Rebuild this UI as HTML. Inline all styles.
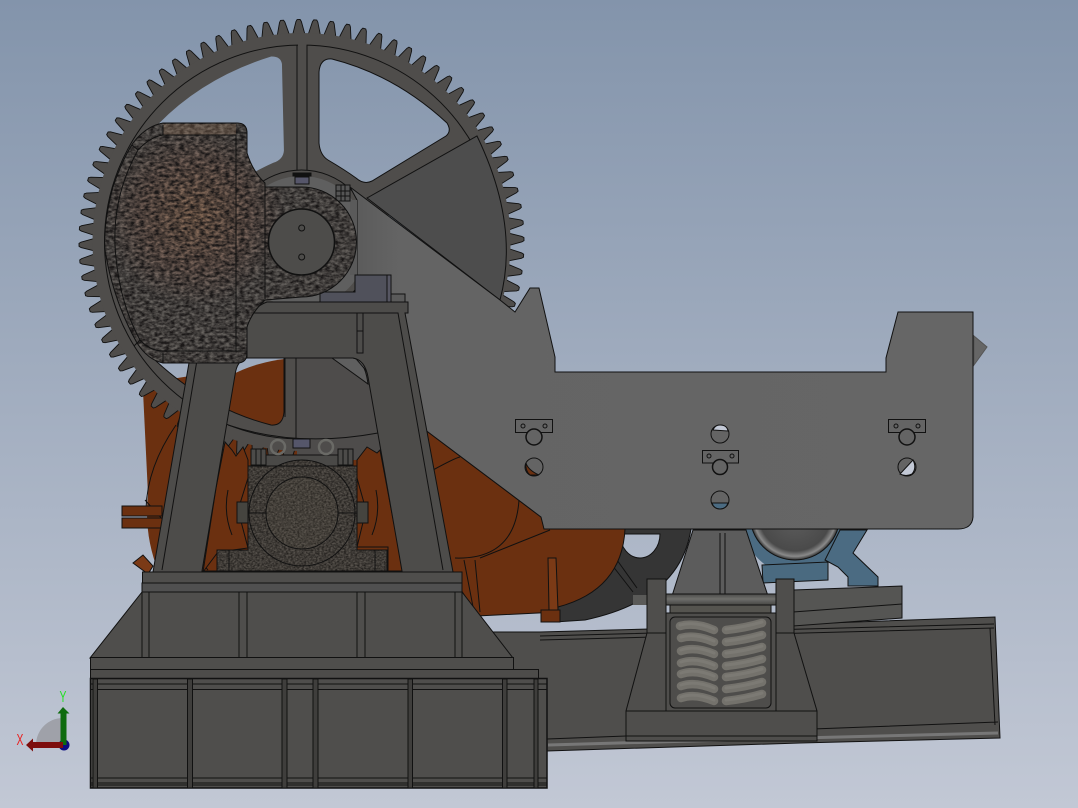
<!DOCTYPE html>
<html><head><meta charset="utf-8"><style>
html,body{margin:0;padding:0;width:1078px;height:808px;overflow:hidden;background:#a0abbd}
svg{display:block}
text{font-family:"Liberation Sans",sans-serif}
</style></head><body>
<svg width="1078" height="808" viewBox="0 0 1078 808" xmlns="http://www.w3.org/2000/svg">
<defs>
<linearGradient id="bg" x1="0" y1="0" x2="0" y2="1"><stop offset="0" stop-color="#8394ab"/><stop offset="1" stop-color="#c2c8d5"/></linearGradient>
<linearGradient id="plate" x1="0" y1="0" x2="1" y2="0"><stop offset="0" stop-color="#5a5a5a"/><stop offset=".08" stop-color="#646464"/><stop offset="1" stop-color="#666"/></linearGradient>
<linearGradient id="rod" x1="0" y1="0" x2="0" y2="1"><stop offset="0" stop-color="#4a4a48"/><stop offset=".45" stop-color="#6f6f6c"/><stop offset="1" stop-color="#454543"/></linearGradient>
<radialGradient id="hubg" gradientUnits="userSpaceOnUse" cx="795" cy="515" r="45"><stop offset="0" stop-color="#5f5f5f"/><stop offset=".8" stop-color="#4a4a4a"/><stop offset=".92" stop-color="#8a8a8a"/><stop offset="1" stop-color="#303030"/></radialGradient>
<radialGradient id="stoneb" gradientUnits="userSpaceOnUse" cx="195" cy="215" r="90"><stop offset="0" stop-color="#8f705a"/><stop offset=".6" stop-color="#78645a"/><stop offset="1" stop-color="#686460"/></radialGradient>
<filter id="stone" x="0" y="0" width="1" height="1" color-interpolation-filters="sRGB">
<feTurbulence type="fractalNoise" baseFrequency=".2 .36" numOctaves="3" seed="4" result="n"/>
<feColorMatrix in="n" values="0 0 0 0 .1 0 0 0 0 .09 0 0 0 0 .09 1.8 0 0 0 -.38" result="d"/>
<feComposite in="d" in2="SourceGraphic" operator="atop"/>
</filter>
<filter id="stone2" x="0" y="0" width="1" height="1" color-interpolation-filters="sRGB">
<feTurbulence type="fractalNoise" baseFrequency=".45 .6" numOctaves="2" seed="9" result="n"/>
<feColorMatrix in="n" values="0 0 0 0 .12 0 0 0 0 .11 0 0 0 0 .1 1.6 0 0 0 -.35" result="d"/>
<feComposite in="d" in2="SourceGraphic" operator="atop"/>
</filter>
<path id="win" d="M319,72 Q320,58 332,59 Q395,75 447,123 Q452,131 446,136 L372,181 Q364,185 356,178 Q345,170 328,160 Q320,155 319,143 Z"/>
<mask id="gm" maskUnits="userSpaceOnUse" x="0" y="0" width="1078" height="808">
<rect width="1078" height="808" fill="#fff"/>
<g fill="#000">
<use href="#win"/>
<use href="#win" transform="rotate(60 301.5 242)"/>
<use href="#win" transform="rotate(120 301.5 242)"/>
<use href="#win" transform="rotate(180 301.5 242)"/>
<use href="#win" transform="rotate(240 301.5 242)"/>
<use href="#win" transform="rotate(300 301.5 242)"/>
</g></mask>
<path id="t" d="M295.500,34 L298.800,21.500 L300,19.500 L303,19.500 L304.200,21.500 L307.500,34 Z"/>
<g id="t7">
<use href="#t"/>
<use href="#t" transform="rotate(4.2857 301.5 242)"/>
<use href="#t" transform="rotate(8.5714 301.5 242)"/>
<use href="#t" transform="rotate(12.8571 301.5 242)"/>
<use href="#t" transform="rotate(17.1429 301.5 242)"/>
<use href="#t" transform="rotate(21.4286 301.5 242)"/>
<use href="#t" transform="rotate(25.7143 301.5 242)"/>
</g>
<g id="t28">
<use href="#t7"/>
<use href="#t7" transform="rotate(30 301.5 242)"/>
<use href="#t7" transform="rotate(60 301.5 242)"/>
<use href="#t7" transform="rotate(90 301.5 242)"/>
</g>
</defs>
<rect width="1078" height="808" fill="url(#bg)"/>

<!-- beam and motor base -->
<g stroke="#111" stroke-width="1">
<path d="M490,632 L540,632 L650,629 L800,624 L995,617 L1000,738 L800,743 L547,751 L490,700 Z" fill="#4f4e4c"/>
<path d="M547,739 L998,722 M540,636 L994,624 M540,640 L994,628 M990,628 L995,725" fill="none"/>
<path d="M548,745 L800,738 L998,733" fill="none" stroke="#777" stroke-width="3"/>
<path d="M793,590 L902,586 V618 L793,626 Z" fill="#555553"/>
<path d="M793,612 L902,604" fill="none"/>

<!-- motor -->
<circle cx="795" cy="522" r="52" fill="#4b6b82" stroke="none"/>
<path d="M840,530 H867 L853,553 L878,577 V586 H848 V577 L838,567 L825,560 Z" fill="#4b6b82"/>
<circle cx="795" cy="515" r="45" fill="url(#hubg)"/>
<path d="M762,565 L828,562 V580 L763,583 Z" fill="#4a6a80"/>

<!-- stand -->
<path d="M693,530 H746 L768,596 H672 Z" fill="#5c5c5c"/>
<path d="M720,533 V596 M725,533 V596" fill="none"/>

<!-- dark disc -->
<path fill-rule="evenodd" d="M600,529 H691 Q680,600 585,620 L555,622 V600 Z M620,534 A20,24 0 0 0 660,534 Z" fill="#353535"/>
<path d="M612,565 L633,592 M617,560 L637,588" fill="none"/>
</g>

<!-- orange -->
<g fill="#6b3010" stroke="#111" stroke-width="1">
<circle cx="302" cy="513" r="155" stroke="none"/>
<path d="M143,391 L165,380 L190,376 L200,500 L158,570 L149,515 Z" stroke="none"/>
<path d="M400,410 L428,432 L541,517 L545,529 H625 Q622,590 558,607 L558,612 L477,616 L452,575 Z"/>
<path d="M548,558 H556 L558,610 H549 Z" fill="#7b3a16"/>
<path d="M541,610 H560 V622 H541 Z"/>
<path d="M208,570 L145,500 M433,470 Q455,458 460,457 M519,500 Q515,560 455,558 M464,560 L474,612 M475,560 L480,612 M480,558 L550,530" fill="none"/>
<path d="M176,425 Q145,470 146,515" fill="none"/>
<path d="M122,506 H162 V516 H122 Z M122,518 H162 V528 H122 Z"/>
<path d="M133,563 L143,555 L153,566 L148,574 Z" fill="#7b3a16"/>
</g>

<!-- gear -->
<g transform="rotate(-0.74 301.5 242)" fill="#4f4d4b" stroke="#111" stroke-width=".9">
<use href="#t28"/>
<use href="#t28" transform="rotate(120 301.5 242)"/>
<use href="#t28" transform="rotate(240 301.5 242)"/>
</g>
<circle cx="301.5" cy="242" r="209" fill="#4f4d4b" mask="url(#gm)"/>
<g fill="none" stroke="#111" stroke-width="1">
<use href="#win"/>
<use href="#win" transform="rotate(120 301.5 242)"/>
<use href="#win" transform="rotate(180 301.5 242)"/>
<circle cx="301.5" cy="242" r="197"/>
<path d="M297,45 V170 M307,45 V170"/>
<path d="M285,358 V417 M296,358 V440"/>
</g>
<rect x="298" y="44" width="8.5" height="3" fill="#4f4d4b"/>

<!-- hub light area -->
<circle cx="301.5" cy="242" r="72" fill="#4f4d4b" stroke="#111"/>
<circle cx="301.5" cy="242" r="66" fill="#5f5f5f"/>

<!-- dark sector -->
<path d="M367,198 L477,136 Q520,225 500,300 Z" fill="#4d4d4d" stroke="#111"/>

<!-- lower right inside opening -->
<path d="M297,358 H372 L404,460 L297,460 Z" fill="#4e4c4b"/>
<path d="M332,358 H353 Q365,360 368,384 Z" fill="#5f5f5f" stroke="#111"/>
<path d="M228,425 Q297,448 378,433" fill="none" stroke="#111"/>
<path d="M225,442 L232,450 L236,456 L243,447 L248,460 L248,478 L238,510 L248,548 L218,552 L203,572 L216,488 Z" fill="#6b3010" stroke="#111"/>
<path d="M367,447 L377,453 L380,450 L403,572 H388 L388,547 H357 L366,510 L357,478 L357,460 Z" fill="#6b3010" stroke="#111"/>
<path d="M228,490 A78,78 0 0 0 232,535 M376,490 A78,78 0 0 1 372,535" fill="none" stroke="#111"/>

<!-- plate -->
<path d="M350,187 L500,300 L515,312 L530,288 L539,288 L555,357 V372 H886 V358 L898,312 H973 V517 Q972,529 958,529 H544 L541,517 L428,432 L400,410 L357,360 V200 Z" fill="url(#plate)" stroke="#111" stroke-width="1"/>
<path d="M974,336 L987,347 L974,365 Z" fill="#666" stroke="#555"/>

<!-- plate holes -->
<g stroke="#111" stroke-width="1" fill="#646464">
<circle cx="534" cy="467" r="9"/><path d="M526,463 Q528,470 539,475 L530,475 Q525,471 526,463 Z" fill="#6b3010"/>
<circle cx="720" cy="434" r="9"/><path d="M713,430 L728,431 Q727,425 720,425 Q715,425 713,430 Z" fill="#c3c9d6"/>
<circle cx="907" cy="467" r="9"/><path d="M900,474 L913,460 Q917,468 912,474 Q906,477 900,474 Z" fill="#c3c9d6"/>
<circle cx="720" cy="500" r="9"/><path d="M712,503 H728 Q726,509 720,509 Q714,509 712,503 Z" fill="#4b6b82"/>
<rect x="515.500" y="419.500" width="37" height="13"/>
<rect x="888.500" y="419.500" width="37" height="13"/>
<rect x="702.500" y="450.500" width="36" height="12.500"/>
<circle cx="534" cy="437" r="8" stroke-width="1.500"/>
<circle cx="907" cy="437" r="8" stroke-width="1.500"/>
<circle cx="720" cy="467" r="7.500" stroke-width="1.500"/>
<circle cx="523" cy="426" r="2"/><circle cx="545" cy="426" r="2"/>
<circle cx="896" cy="426" r="2"/><circle cx="918" cy="426" r="2"/>
<circle cx="709" cy="456" r="2"/><circle cx="732" cy="456" r="2"/>
</g>

<!-- upper machinery near hub -->
<g stroke="#111" stroke-width="1">
<path d="M350,200 H357 V275 H350 Z" fill="#5a5a5a" stroke="none"/>
<path d="M355,275 H387 V302 H320 V292 H355 Z" fill="#50515b"/>
<path d="M387,275 H391 V302 H387 Z" fill="#565662"/>
<path d="M391,294 H405 V302 H391 Z" fill="#5a5a5a"/>
<rect x="336" y="185" width="14" height="16" fill="#555"/>
<path d="M341,185 V201 M345,185 V201 M336,191 H350 M336,196 H350" fill="none"/>
<rect x="293" y="173" width="18" height="3" fill="#111"/>
<rect x="295" y="177" width="14" height="7" fill="#56566a"/>
</g>

<!-- frame -->
<g stroke="#111" stroke-width="1" fill="#4d4c4a">
<path fill-rule="evenodd" d="M267,302 H408 V313 H405 L453,572 H153 L190,357 H247 V327 Q250,308 267,302 Z M247,358 H353 Q365,360 368,377 L402,571 H202 L235,375 Q237,360 247,358 Z"/>
<path d="M253,313 H398 L443,570 M197,360 L162,570" fill="none"/>
<rect x="357" y="313" width="6" height="40" fill="#4d4c4a"/>
<path d="M357,331 H363" fill="none"/>
</g>

<!-- stone block and hub -->
<g filter="url(#stone)">
<path d="M163,123 H237 Q247,123 247,133 V153 Q253,172 265,183 V187 H301.500 A55,55 0 0 1 301.500,297 L265,300 Q252,312 247,327 V353 Q247,363 237,363 H163 Q148,360 137,343 Q113,300 105,250 Q103,225 113,187 Q122,160 133,143 Q146,126 163,123 Z" fill="url(#stoneb)"/>
</g>
<rect x="163" y="124" width="73" height="11" fill="#9a7a60" fill-opacity=".3"/>
<path d="M163,123 H237 Q247,123 247,133 V153 Q253,172 265,183 V187 H301.500 A55,55 0 0 1 301.500,297 L265,300 Q252,312 247,327 V353 Q247,363 237,363 H163 Q148,360 137,343 Q113,300 105,250 Q103,225 113,187 Q122,160 133,143 Q146,126 163,123 Z" fill="none" stroke="#111"/>
<g fill="none" stroke="#111" stroke-width="1">
<path d="M163,125 V135 M163,353 V363 M163,135 H236 V351 H163 M247,133 H236 M247,351 H236"/>
<path d="M163,135 Q150,137 138,150 Q113,195 115,245 Q118,300 140,340 Q150,351 163,351"/>
<path d="M265,183 V299"/>
<path d="M138,150 L132,145 M140,340 L134,346"/>
</g>
<circle cx="301.500" cy="242" r="33" fill="#4d4c4a" stroke="#111" stroke-width="1.500"/>
<circle cx="301.700" cy="228" r="3" fill="#4d4c4a" stroke="#111"/>
<circle cx="301.700" cy="257" r="3" fill="#4d4c4a" stroke="#111"/>

<!-- pillow block -->
<g stroke="#111" stroke-width="1">
<path d="M266,455 H338 V468 H266 Z" fill="#4a4947"/>
<circle cx="278" cy="447" r="7" fill="none" stroke="#6a6a66" stroke-width="2.500"/>
<circle cx="326" cy="447" r="7" fill="none" stroke="#6a6a66" stroke-width="2.500"/>
<rect x="293" y="439" width="17" height="9" fill="#55566a"/>
<rect x="251" y="449" width="15" height="16" fill="#4c4b49"/>
<rect x="338" y="449" width="15" height="16" fill="#4c4b49"/>
<path d="M256,449 V465 M261,449 V465 M343,449 V465 M348,449 V465" fill="none"/>
<rect x="237" y="502" width="11" height="21" fill="#45443f"/>
<rect x="356" y="502" width="12" height="21" fill="#45443f"/>
<g filter="url(#stone2)">
<path d="M248,466 H357 V550 H387 V571 H217 V550 H248 Z" fill="#59544e" stroke="none"/>
<circle cx="302" cy="513" r="53" fill="#59544e" stroke="none"/>
</g>
<rect x="217" y="550" width="12" height="21" fill="none"/>
<rect x="375" y="550" width="12" height="21" fill="none"/>
<path d="M248,466 H357 V550 H387 V571 H217 V550 H248 Z" fill="none"/>
<circle cx="302" cy="513" r="53" fill="none"/>
<circle cx="302" cy="513" r="36" fill="#6b5f50" fill-opacity=".12"/>
<path d="M248,513 H266 M338,513 H357" fill="none"/>
</g>

<!-- pedestal -->
<g stroke="#111" stroke-width="1" fill="#4f4e4c">
<path d="M142,592 L90,658 H513 L462,592 Z"/>
<rect x="142" y="583" width="320" height="9" fill="#505050"/>
<rect x="142.500" y="572" width="319.500" height="11" fill="#4f4e4c"/>
<path d="M142,592 V658 M149,592 V658 M239,592 V658 M247,592 V658 M357,592 V658 M365,592 V658 M455,592 V658 M462,592 V658" fill="none"/>
<rect x="90.500" y="657.500" width="423" height="12"/>
<rect x="90.500" y="669.500" width="448" height="9" fill="#4d4c4a"/>
<rect x="90.500" y="678.500" width="456.500" height="109.500" stroke-width="1.500"/>
<path d="M91,684 H547 M91,689.500 H547 M91,778 H547 M91,783 H547 M91,785 H547" fill="none"/>
<g fill="#3f3e3c">
<rect x="93" y="679" width="4.500" height="109"/>
<rect x="187.500" y="679" width="5" height="109"/>
<rect x="282" y="679" width="5" height="109"/>
<rect x="313" y="679" width="5" height="109"/>
<rect x="408" y="679" width="4.500" height="109"/>
<rect x="502.500" y="679" width="4.500" height="109"/>
<rect x="534" y="679" width="4" height="109"/>
</g>
</g>

<!-- spring support -->
<g stroke="#111" stroke-width="1">
<path d="M647,633 L626,711 V741 H817 V711 L794,633 V579 H776 V613 H666 V579 H647 Z" fill="#4f4e4c"/>
<rect x="666" y="613" width="110" height="98" fill="#4f4e4c"/>
<rect x="670" y="617" width="101" height="91" rx="5" fill="#4e4d4b"/>
<rect x="633" y="595" width="14" height="10" fill="#5a5a58" stroke="none"/>
<rect x="670" y="605" width="101" height="8" fill="#55544f"/>
<rect x="666" y="594" width="110" height="11" fill="url(#rod)"/>
<rect x="647" y="579" width="19" height="54" fill="#4f4e4c"/>
<rect x="776" y="579" width="18" height="54" fill="#4f4e4c"/>
<path d="M666,633 V711 M776,633 V711 M626,711 H817 M626,736 H817" fill="none"/>
</g>
<g fill="none" stroke="#74726c" stroke-width="8.500" stroke-linecap="round">
<path d="M680,626 Q695,622 714,630 M681,638 Q695,634 714,642 M681,651 Q695,646 714,654 M681,663 Q695,658 714,666 M681,674 Q695,669 714,677 M681,686 Q695,681 714,689 M681,698 Q695,693 714,701"/>
<path d="M726,630 Q745,628 762,623 M726,642 Q745,640 762,635 M726,654 Q745,652 762,647 M726,666 Q745,664 762,659 M726,677 Q745,675 762,670 M726,689 Q745,687 762,682 M726,701 Q745,699 762,694"/>
</g>
<g fill="none" stroke="#7c7a74" stroke-width="3" stroke-linecap="round">
<path d="M680,625 Q695,621 714,629 M681,637 Q695,633 714,641 M681,650 Q695,645 714,653 M681,662 Q695,657 714,665 M681,673 Q695,668 714,676 M681,685 Q695,680 714,688 M681,697 Q695,692 714,700"/>
<path d="M726,629 Q745,627 762,622 M726,641 Q745,639 762,634 M726,653 Q745,651 762,646 M726,665 Q745,663 762,658 M726,676 Q745,674 762,669 M726,688 Q745,686 762,681 M726,700 Q745,698 762,693"/>
</g>

<!-- triad -->
<path d="M63,745 H36 A27,27 0 0 1 63,718 Z" fill="#9fa1a9"/>
<circle cx="64" cy="745" r="5.500" fill="#0c0c80"/>
<path d="M63,707 L69.500,713.500 H66.500 V745 H60.500 V713.500 H57.500 Z" fill="#0e6b0e"/>
<path d="M26,745 L33,738.500 V742 H63 V748 H33 V751.500 Z" fill="#7d0d0d"/>
<text transform="translate(63 702) scale(.65 1)" font-size="16" fill="#22e022" text-anchor="middle">Y</text>
<text transform="translate(20 745) scale(.65 1)" font-size="16" fill="#e82020" text-anchor="middle">X</text>
</svg>
</body></html>
